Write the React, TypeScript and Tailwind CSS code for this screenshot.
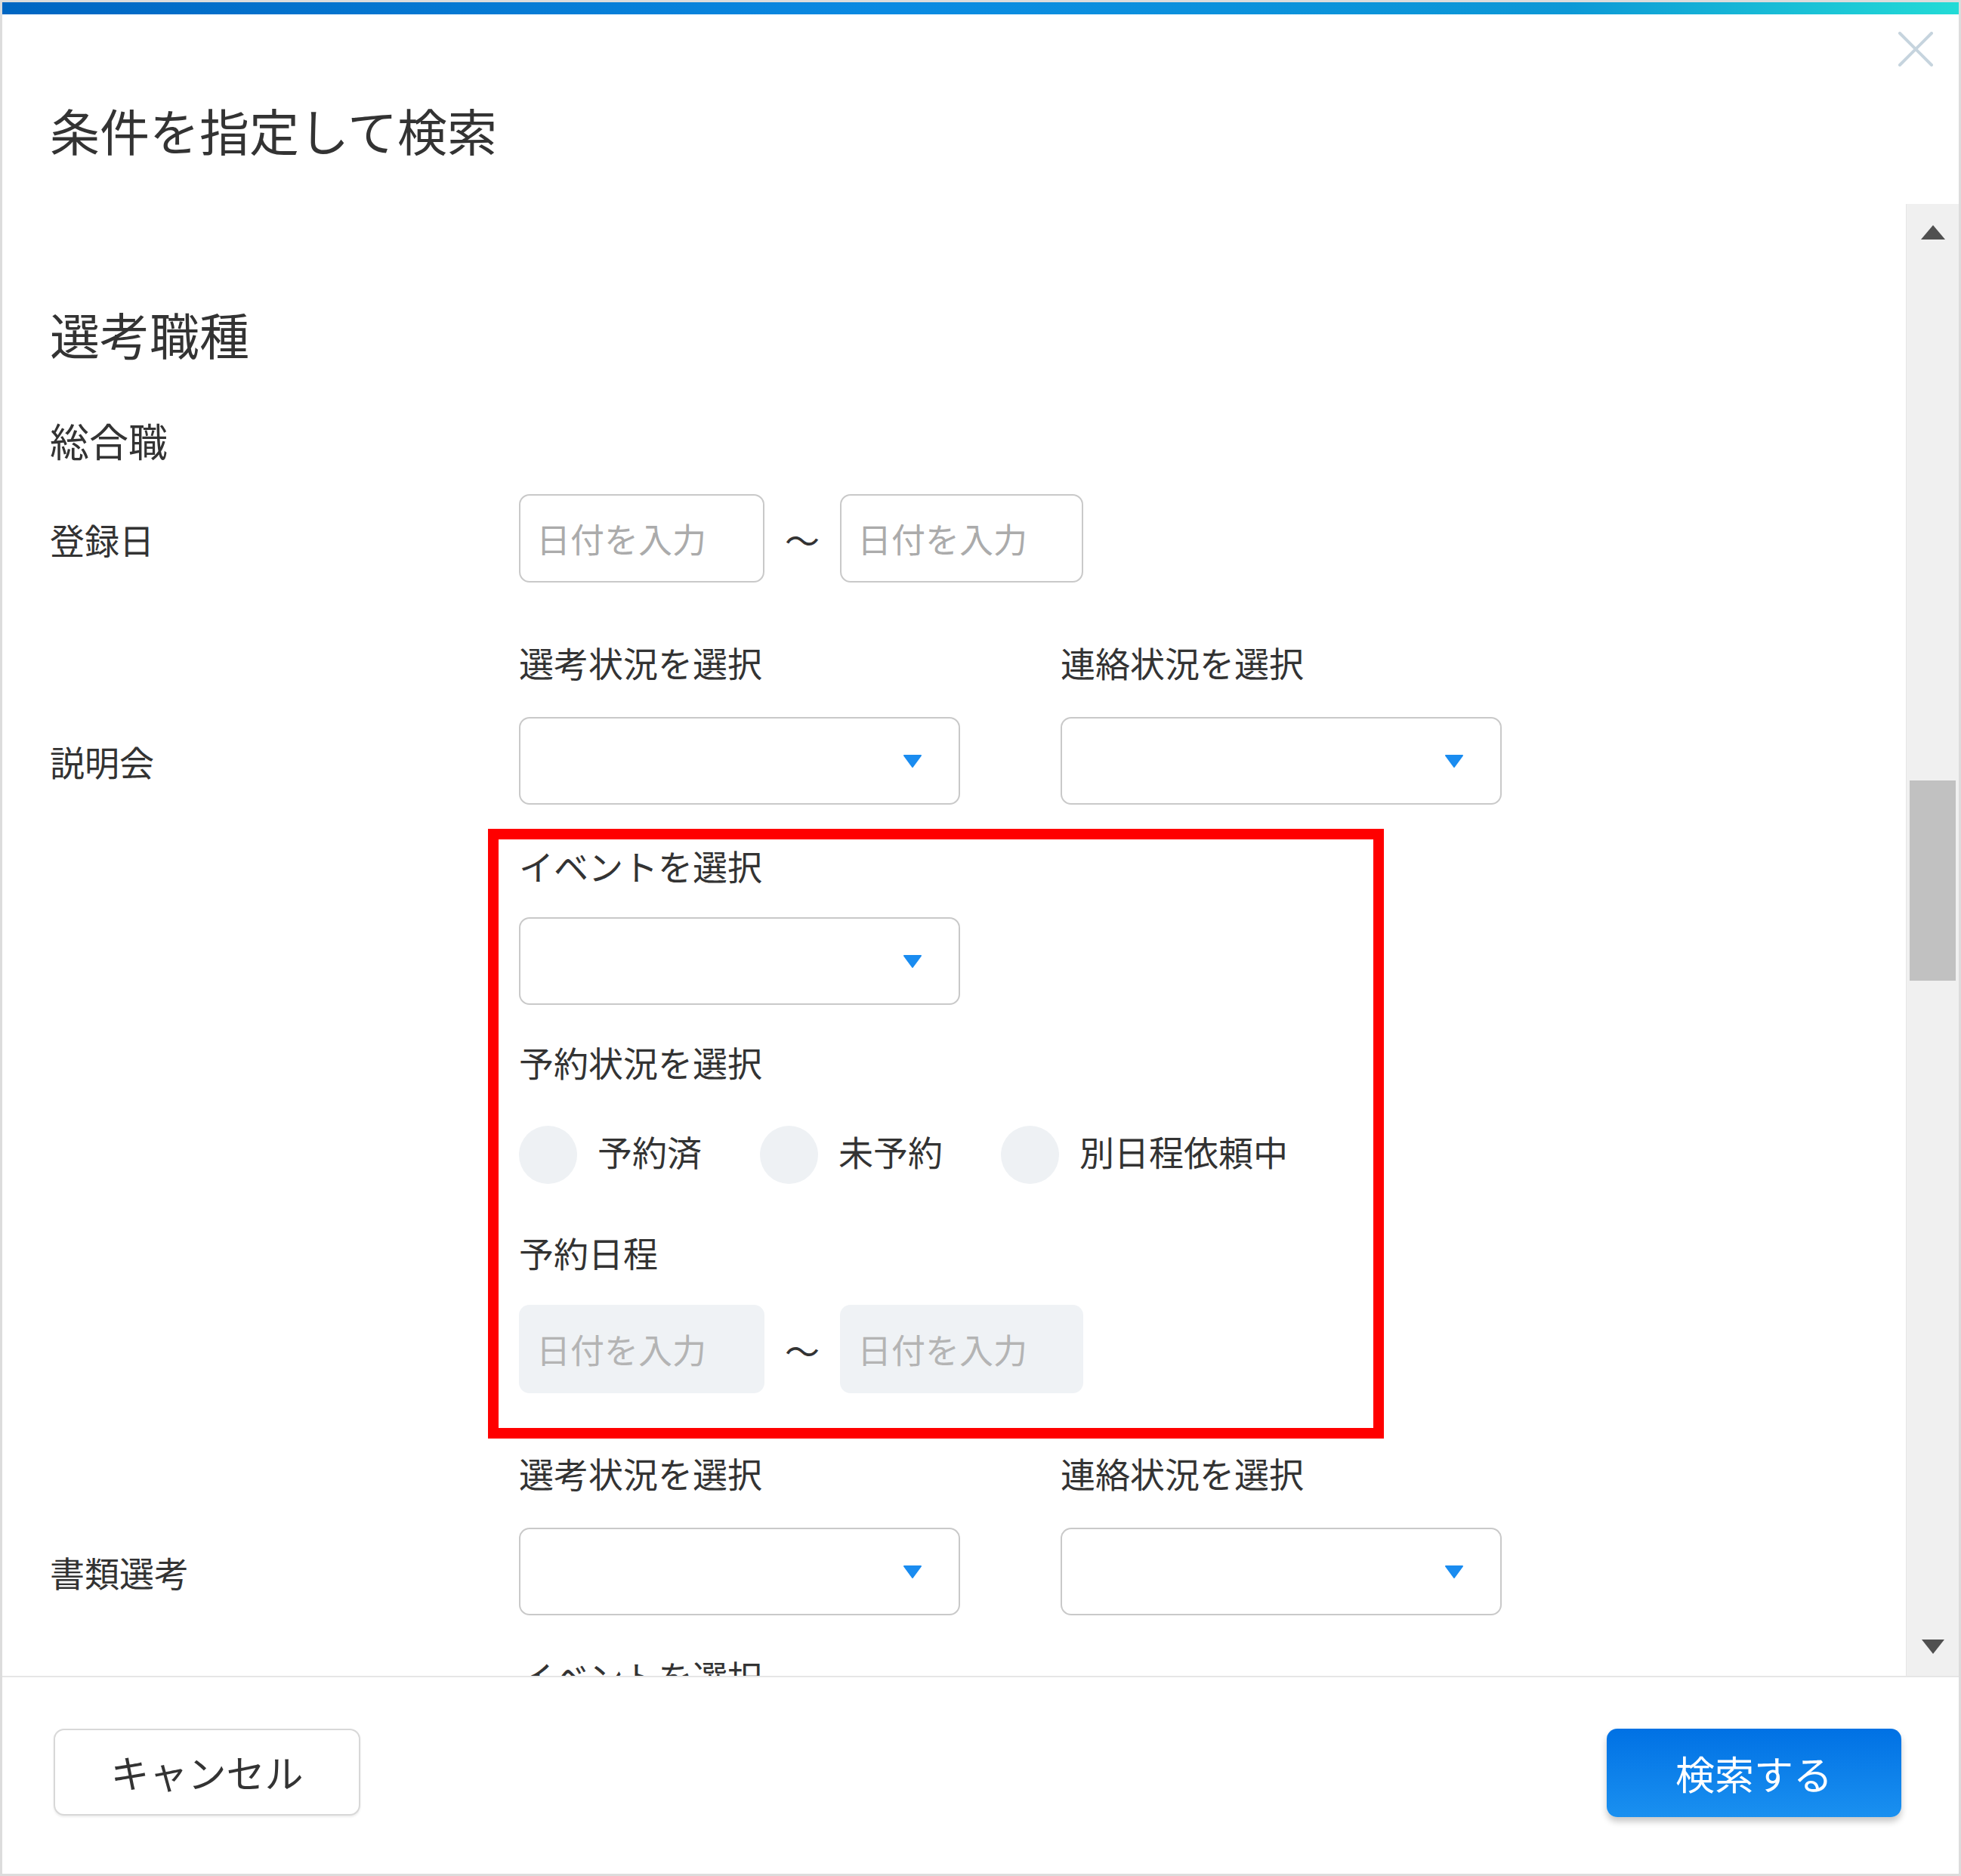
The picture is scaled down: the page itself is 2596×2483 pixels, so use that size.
import React from "react";

const jp = "font-['Noto_Sans_CJK_JP','Noto_Sans',sans-serif]";

function Caret() {
  return (
    <svg width="26" height="18" viewBox="0 0 26 18">
      <path d="M2 2 H24 L13 17 Z" fill="#1a8cf0" stroke="#1a8cf0" strokeWidth="2" strokeLinejoin="round" />
    </svg>
  );
}

function Select() {
  return (
    <div className="w-[584px] h-[116px] rounded-[14px] border-2 border-[#c9c9c9] bg-white flex items-center justify-end pr-[48px]">
      <Caret />
    </div>
  );
}

function DateInput({ disabled, w }: { disabled?: boolean; w: string }) {
  return (
    <div
      className={
        disabled
          ? `${w} h-[117px] rounded-[14px] bg-[#eff2f5] flex items-center pl-[23px] text-[45px] leading-[45px] text-[#b4b4b4]`
          : `${w} h-[117px] rounded-[14px] border-2 border-[#c9c9c9] bg-white flex items-center pl-[21px] text-[45px] leading-[45px] text-[#ababab]`
      }
    >
      日付を入力
    </div>
  );
}

function DateRange({ disabled }: { disabled?: boolean }) {
  return (
    <div className="flex items-center gap-[27px]">
      <DateInput disabled={disabled} w="w-[325px]" />
      <span className="w-[46px] text-[46px] leading-[46px] text-[#333333]">〜</span>
      <DateInput disabled={disabled} w="w-[322px]" />
    </div>
  );
}

function Radio({ label }: { label: string }) {
  return (
    <div className="flex items-center gap-[27px]">
      <span className="w-[77px] h-[77px] rounded-full bg-[#eef1f4]" />
      <span className="mb-[12px] text-[46px] leading-[46px]">{label}</span>
    </div>
  );
}

function Stage({ label, children }: { label: string; children?: React.ReactNode }) {
  return (
    <div>
      <div className="mt-[82px] flex">
        <div className="w-[621px] shrink-0" />
        <div className="flex gap-[133px] text-[46px] leading-[46px]">
          <span className="w-[584px]">選考状況を選択</span>
          <span>連絡状況を選択</span>
        </div>
      </div>
      <div className="mt-[50px] flex items-center">
        <div className="w-[621px] shrink-0 text-[46px] leading-[46px]">{label}</div>
        <div className="flex gap-[133px]">
          <Select />
          <Select />
        </div>
      </div>
      {children}
    </div>
  );
}

function EventBlock({ full }: { full?: boolean }) {
  return (
    <div className="ml-[621px] flex flex-col items-start">
      <p className="mt-[57px] text-[46px] leading-[46px]">イベントを選択</p>
      {full && (
        <>
          <div className="mt-[46px]">
            <Select />
          </div>
          <p className="mt-[52px] text-[46px] leading-[46px]">予約状況を選択</p>
          <div className="mt-[62px] flex gap-[77px]">
            <Radio label="予約済" />
            <Radio label="未予約" />
            <Radio label="別日程依頼中" />
          </div>
          <p className="mt-[67px] text-[46px] leading-[46px]">予約日程</p>
          <div className="mt-[47px]">
            <DateRange disabled />
          </div>
        </>
      )}
    </div>
  );
}

function Scrollbar() {
  return (
    <div className="w-[70px] shrink-0 bg-[#f0f0f0] border-l border-[#e6e6e6] flex flex-col items-center">
      <svg className="mt-[28px]" width="32" height="19" viewBox="0 0 32 19">
        <path d="M16 0 L32 19 H0 Z" fill="#505050" />
      </svg>
      <div className="mt-[716px] w-[61px] h-[265px] bg-[#c1c1c1]" />
      <div className="flex-1" />
      <svg className="mb-[29px]" width="30" height="19" viewBox="0 0 30 19">
        <path d="M0 0 H30 L15 19 Z" fill="#505050" />
      </svg>
    </div>
  );
}

export default function App() {
  return (
    <div className={`w-[2596px] h-[2483px] border-[3px] border-[#dcdcdc] bg-white flex flex-col overflow-hidden text-[#333333] ${jp}`}>
      <div className="h-[16px] shrink-0 bg-[linear-gradient(90deg,#0066c2_0%,#0a8ae2_45%,#0c98d6_80%,#23dbd6_100%)]" />

      {/* header */}
      <div className="h-[251px] shrink-0 flex justify-between items-start pl-[63px] pr-[33px]">
        <h1 className="mt-[119px] text-[66px] leading-[66px] font-normal">条件を指定して検索</h1>
        <button className="mt-[23px] w-[48px] h-[46px]">
          <svg width="48" height="46" viewBox="0 0 48 46">
            <path d="M3 2 L45 44 M45 2 L3 44" stroke="#c6d4de" strokeWidth="4" strokeLinecap="round" />
          </svg>
        </button>
      </div>

      {/* scroll area */}
      <div className="flex-1 min-h-0 flex">
        <div className="flex-1 relative overflow-hidden pl-[63px] pt-[138px]">
          <h2 className="text-[66px] leading-[66px] font-normal">選考職種</h2>
          <p className="mt-[83px] text-[52px] leading-[52px]">総合職</p>
          <div className="mt-[45px] flex items-center">
            <div className="w-[621px] shrink-0 text-[46px] leading-[46px]">登録日</div>
            <DateRange />
          </div>

          <Stage label="説明会">
            <EventBlock full />
          </Stage>
          <Stage label="書類選考">
            <EventBlock />
          </Stage>

          {/* annotation frame */}
          <div className="absolute left-[643px] top-[827px] w-[1186px] h-[807px] border-[14px] border-[#ff0000] pointer-events-none" />
        </div>
        <Scrollbar />
      </div>

      {/* footer */}
      <div className="h-[262px] shrink-0 border-t-2 border-[#e6e6e6] flex justify-between items-start pt-[68px] pl-[68px] pr-[76px]">
        <button className="w-[406px] h-[115px] rounded-[14px] border-2 border-[#d8d8d8] bg-white shadow-[0_2px_3px_rgba(0,0,0,0.08)] text-[51px] leading-[51px] text-[#333333]">
          キャンセル
        </button>
        <button className="w-[390px] h-[117px] rounded-[14px] bg-[linear-gradient(180deg,#0071e4_0%,#1a90f0_100%)] shadow-[0_6px_8px_rgba(0,0,0,0.22)] text-[52px] leading-[52px] text-white">
          検索する
        </button>
      </div>
    </div>
  );
}
